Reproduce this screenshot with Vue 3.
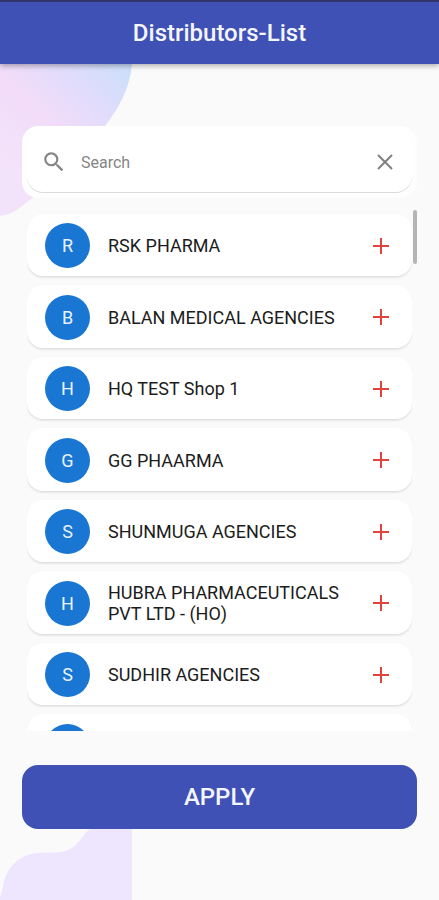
<script setup>
import { ref, computed } from 'vue'

const query = ref('')
const distributors = [
  'RSK PHARMA',
  'BALAN MEDICAL AGENCIES',
  'HQ TEST Shop 1',
  'GG PHAARMA',
  'SHUNMUGA AGENCIES',
  'HUBRA PHARMACEUTICALS PVT LTD - (HO)',
  'SUDHIR AGENCIES',
  ''
]
const visible = computed(() =>
  distributors.filter((name) => name.toLowerCase().includes(query.value.toLowerCase()))
)
</script>

<template>
  <div class="page">
    <svg class="blob blob-top" viewBox="0 0 132 152" aria-hidden="true">
      <defs>
        <linearGradient id="blobFill" x1="132" y1="0" x2="20" y2="120" gradientUnits="userSpaceOnUse">
          <stop offset="0" stop-color="#c8e0fa" />
          <stop offset="0.3" stop-color="#e0dcfc" />
          <stop offset="0.6" stop-color="#f2dcf9" />
          <stop offset="1" stop-color="#f3e3fa" />
        </linearGradient>
      </defs>
      <path d="M0 0H132C130 24 119 44 105 62C90 84 70 112 36 132C24 138 18 150 0 152Z" fill="url(#blobFill)" />
    </svg>
    <svg class="blob blob-bottom" viewBox="0 0 132 80" aria-hidden="true">
      <path d="M0 80C0 75 2 73 3 67C5 48 20 34 38 33C50 32 62 34 72 28C80 23 83 14 91 8L100 0H132V80Z" fill="#eee5fe" />
    </svg>

    <header class="bar">
      <h1>Distributors-List</h1>
    </header>

    <main class="content">
      <div class="search-shell">
        <div class="search">
          <label class="field">
            <svg class="lens" viewBox="0 0 24 24" aria-label="Search">
              <path d="M15.5 14h-.79l-.28-.27A6.47 6.47 0 0 0 16 9.5 6.5 6.5 0 1 0 9.5 16c1.61 0 3.09-.59 4.23-1.57l.27.28v.79l5 4.99L20.49 19l-4.99-5zm-6 0C7.01 14 5 11.99 5 9.5S7.01 5 9.5 5 14 7.01 14 9.5 11.99 14 9.5 14z" fill="#858585" />
            </svg>
            <input v-model="query" type="text" placeholder="Search" />
          </label>
          <button class="icon-button" type="button" aria-label="Clear" @click="query = ''">
            <svg viewBox="0 0 24 24"><path d="M5 5L19 19M19 5L5 19" stroke="#808080" stroke-width="2" /></svg>
          </button>
        </div>
      </div>

      <div class="list-area">
        <ul class="list">
          <li v-for="name in visible" :key="name" class="row">
            <span class="avatar">{{ name.charAt(0) }}</span>
            <span class="name">{{ name }}</span>
            <button class="icon-button" type="button" aria-label="Add">
              <svg viewBox="0 0 24 24"><path d="M12 4V20M4 12H20" stroke="#e2433c" stroke-width="2" /></svg>
            </button>
          </li>
        </ul>
        <span class="thumb"></span>
      </div>

      <button class="apply" type="button">APPLY</button>
    </main>
  </div>
</template>

<style>
body {
  margin: 0;
}
</style>

<style scoped>
* {
  box-sizing: border-box;
}
.page {
  position: relative;
  height: 100vh;
  display: flex;
  flex-direction: column;
  overflow: hidden;
  background: #fafafa;
  font-family: Roboto, "Liberation Sans", sans-serif;
}
.blob {
  position: absolute;
  left: 0;
  width: 132px;
}
.blob-top {
  top: 64px;
  height: 152px;
}
.blob-bottom {
  bottom: 0;
  height: 80px;
}
.bar {
  position: relative;
  flex: none;
  height: 64px;
  display: flex;
  align-items: center;
  justify-content: center;
  border-top: 2px solid #33336b;
  background: #3f51b5;
  box-shadow: 0 2px 5px rgba(0, 0, 0, 0.3);
}
h1 {
  margin: 0;
  color: #f4f6ff;
  font-size: 24px;
  font-weight: 500;
  line-height: 28px;
}
.content {
  position: relative;
  flex: 1;
  min-height: 0;
  display: flex;
  flex-direction: column;
  padding: 62px 22px 71px;
}
.search-shell {
  flex: none;
  padding: 0 5px 5px;
  border-radius: 16px;
  background: #fefefe;
}
.search {
  display: flex;
  align-items: center;
  height: 67px;
  padding: 5px 15px 0 14px;
  border-radius: 16px;
  background: #fff;
  box-shadow: inset 0 -1px 0 #dcdcdc;
}
.field {
  flex: 1;
  min-width: 0;
  display: flex;
  align-items: center;
  gap: 14px;
}
.lens {
  flex: none;
  width: 26px;
  height: 26px;
}
input {
  flex: 1;
  min-width: 0;
  padding: 2px 0 0;
  border: 0;
  outline: 0;
  background: transparent;
  color: #222;
  font: 400 16px/24px Roboto, "Liberation Sans", sans-serif;
}
input::placeholder {
  color: #858585;
  opacity: 1;
}
.icon-button {
  flex: none;
  display: flex;
  padding: 0;
  border: 0;
  background: transparent;
}
.icon-button svg {
  width: 24px;
  height: 24px;
}
.list-area {
  position: relative;
  flex: 1;
  min-height: 0;
  margin-top: 12px;
  padding: 0 5px;
}
.list {
  height: 100%;
  margin: 0;
  padding: 4px 0 0;
  display: grid;
  grid-auto-rows: 63px 64px;
  gap: 8px;
  overflow-y: auto;
  scrollbar-width: none;
  list-style: none;
}
.row {
  display: flex;
  align-items: center;
  padding: 0 19px 0 18px;
  border-radius: 16px;
  background: #fff;
  box-shadow: inset 0 -1px 0 #e0e0e0, 0 1px 2px rgba(0, 0, 0, 0.08);
}
.avatar {
  flex: none;
  display: flex;
  align-items: center;
  justify-content: center;
  width: 45px;
  height: 45px;
  border-radius: 50%;
  background: #1976d2;
  color: #e8f3ff;
  font-size: 18px;
}
.name {
  flex: 1;
  min-width: 0;
  padding: 0 16px 0 18px;
  color: #1c1c1c;
  font-size: 18px;
  line-height: 21px;
}
.thumb {
  position: absolute;
  top: 0;
  right: 0;
  width: 4px;
  height: 54px;
  border-radius: 2px;
  background: #b5b5b5;
}
.apply {
  flex: none;
  height: 64px;
  margin-top: 34px;
  border: 0;
  border-radius: 16px;
  background: #3f51b5;
  color: #f4f6ff;
  font: 500 24px/28px Roboto, "Liberation Sans", sans-serif;
}
</style>
